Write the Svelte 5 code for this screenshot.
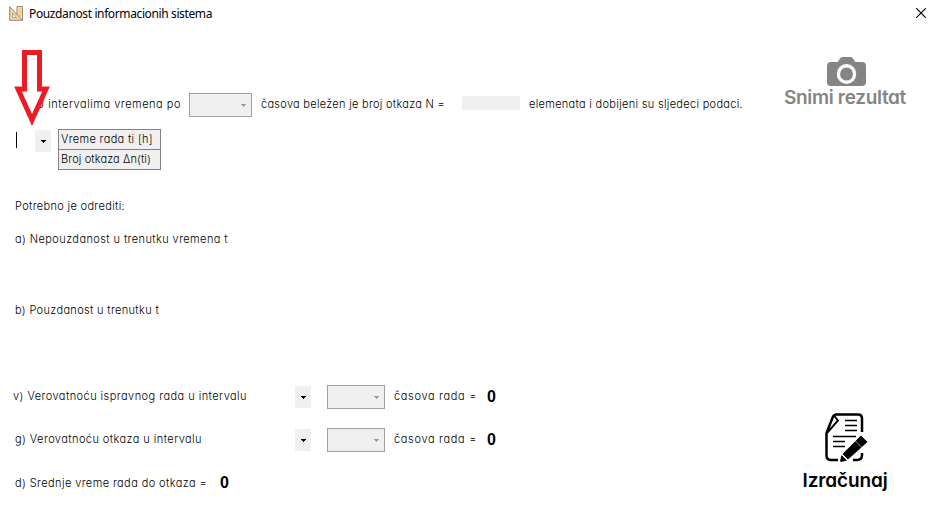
<script>
  // Tracks a label so that its text spans the given width in pixels.
  function span(node, width) {
    const n = [...node.textContent].length;
    const natural = node.getBoundingClientRect().width;
    node.style.letterSpacing = `${(width - natural) / n}px`;
  }

  const intervals = [
    { label: 'v) Verovatnoću ispravnog rada u intervalu', width: 234, indent: 13 },
    { label: 'g) Verovatnoću otkaza u intervalu', width: 187, indent: 15 }
  ];
</script>

{#snippet caret()}
  <svg class="caret" width="5" height="3" viewBox="0 0 5 3" shape-rendering="crispEdges"><path d="M0 0h5v1H4v1H3v1H2V2H1V1H0z" fill="currentColor" /></svg>
{/snippet}

<div class="window">
  <header>
    <svg width="14" height="15" viewBox="0 0 14 15">
      <path d="M8 .5h5.500v13H8z" fill="#ffe1a8" stroke="#958771" />
      <path d="M10 3h2M10 5h2M10 7h2M10 9h2" stroke="#c49a62" stroke-width=".6" />
      <path d="M.7.7v13.600h12.800z" fill="#f8d59b" stroke="#8f877b" />
      <path d="M3.500 7v4.500h4z" fill="#fff" stroke="#9c907d" stroke-width=".8" />
    </svg>
    <h1><span use:span={183}>Pouzdanost informacionih sistema</span></h1>
    <svg class="close" width="10" height="10" viewBox="0 0 10 10"><path d="M.2.2l9.600 9.600M9.800.2L.2 9.800" stroke="#000" stroke-width="1.150" /></svg>
  </header>

  <div class="body">
    <main>
      <div class="row first">
        <span class="t" use:span={145}>U intervalima vremena po</span>
        <div class="combo wide">{@render caret()}</div>
        <span class="t hours" use:span={184}>časova beležen je broj otkaza N =</span>
        <div class="total"></div>
        <span class="t" use:span={214}>elemenata i dobijeni su sljedeci podaci.</span>
      </div>

      <div class="entry">
        <i class="cursor"></i>
        <button class="drop" aria-label="Izaberi">{@render caret()}</button>
        <div class="table">
          <div><span class="t" use:span={92}>Vreme rada ti [h]</span></div>
          <div><span class="t" use:span={90}>Broj otkaza Δn(ti)</span></div>
        </div>
      </div>

      <p class="needed"><span class="t" use:span={110}>Potrebno je odrediti:</span></p>
      <p class="qa"><span class="t" use:span={213}>a) Nepouzdanost u trenutku vremena t</span></p>
      <p class="qb"><span class="t" use:span={144}>b) Pouzdanost u trenutku t</span></p>

      {#each intervals as row}
        <div class="row interval">
          <div class="name" style:padding-left="{row.indent}px"><span class="t" use:span={row.width}>{row.label}</span></div>
          <button class="drop" aria-label="Izaberi">{@render caret()}</button>
          <div class="combo">{@render caret()}</div>
          <span class="t rada" use:span={83}>časova rada =</span>
          <b>0</b>
        </div>
      {/each}

      <div class="row last"><span class="t" use:span={192}>d) Srednje vreme rada do otkaza =</span><b>0</b></div>
    </main>

    <aside>
      <div class="action save">
        <svg width="39" height="30" viewBox="0 0 40 30" preserveAspectRatio="none">
          <path fill-rule="evenodd" fill="#858585" d="M4 5h7l2-3q1-2 3-2h8q2 0 3 2l2 3h7q4 0 4 4v16q0 4-4 4H4q-4 0-4-4V9q0-4 4-4zM20 7a10 10 0 1 0 0 20 10 10 0 0 0 0-20z" />
          <circle cx="20" cy="17" r="6.600" fill="#858585" />
        </svg>
        <strong><span use:span={122}>Snimi rezultat</span></strong>
      </div>
      <div class="action calc">
        <svg width="44" height="50" viewBox="0 0 44 50">
          <path d="M10 1.500h23q4 0 4 4V19M37 40v2q0 5-5 5h-4M13 47H6q-4.500 0-4.500-4.500V20L8 3.500q1-2 3-2" fill="none" stroke="#000" stroke-width="2.500" />
          <path d="M8.500 2l4.500 5.500L2 20" fill="none" stroke="#000" stroke-width="1.900" />
          <path d="M20 7.500h12M20 12.500h12M20 17.500h12M8 23.500h23M8 28.500h12M8 33.500h12" fill="none" stroke="#000" stroke-width="1.600" />
          <path d="M36 22.500l6.500 6.500-19.500 17.500-5.500-5.500zM16.500 42l5.500 5.500-6 1.500-1-1z" />
          <path d="M30.500 28l6.500 6.500M17 41.300l6 6" stroke="#fff" stroke-width=".6" />
        </svg>
        <strong><span use:span={85}>Izračunaj</span></strong>
      </div>
    </aside>
  </div>

  <svg class="arrow" width="38" height="80" viewBox="0 0 38 80">
    <path d="M10.500 4.500h15V41h6.500L18 72 4 41h6.500z" fill="#fff" stroke="#ed1c24" stroke-width="5" />
  </svg>
</div>

<style>
  :global(body) { background: #fff; }
  .window {
    position: relative; width: 936px; height: 519px; overflow: hidden; background: #fff; color: #000;
    font: 300 11px/14px "Century Gothic", Inter, sans-serif; font-feature-settings: "cv11" 1;
  }
  svg { display: block; flex: none; }
  header { display: flex; height: 28px; box-sizing: border-box; padding: 6px 10px 0 9px; }
  h1 { margin: 0 0 0 6px; font: 12px/16px "Segoe UI", "Noto Sans", sans-serif; flex: 1; }
  .close { margin-top: 2px; }
  .body { display: flex; }
  main { width: 770px; }
  .t, h1 span, strong span { display: inline-block; white-space: pre; }
  .t { flex: none; }
  .row { display: flex; align-items: center; }
  .first { height: 24px; margin-top: 65px; padding-left: 36px; }
  .first .t { padding-bottom: 2px; }
  .combo {
    display: flex; align-items: center; justify-content: flex-end; box-sizing: border-box; flex: none;
    width: 58px; height: 24px; padding-right: 5px; background: #f0f0f0; border: 1px solid #a0a0a0; color: #a0a0a0;
  }
  .combo.wide { width: 63px; margin-left: 8px; }
  .hours { margin-left: 9px; }
  .total { width: 58px; height: 14px; margin: 0 9px 4px 17px; background: #f0f0f0; }
  .entry { display: flex; height: 42px; margin-top: 12px; padding-left: 16px; }
  .cursor { width: 1px; height: 16px; margin-top: 3px; background: #000; }
  .drop {
    display: flex; align-items: center; justify-content: center; flex: none;
    width: 16px; height: 22px; padding: 0; border: 0; background: #f0f0f0; color: #000;
  }
  .entry .drop { margin: 1px 7px 0 18px; }
  .table { box-sizing: border-box; width: 103px; height: 41px; border: 1px solid #828282; background: #f0f0f0; }
  .table div { height: 19px; padding: 2px 0 0 2px; box-sizing: border-box; }
  .table div + div { border-top: 1px solid #828282; height: 20px; }
  p { margin: 0; padding-left: 15px; height: 14px; }
  .needed { margin-top: 28px; }
  .qa { margin-top: 19px; }
  .qb { margin: 57px 0 68px; }
  .interval { height: 24px; margin-bottom: 19px; }
  .name { box-sizing: border-box; width: 295px; height: 16px; }
  .interval .combo { margin-left: 16px; }
  .rada { margin-left: 9px; padding-bottom: 2px; }
  b { margin-left: 10px; font: bold 16px/20px "Liberation Sans", sans-serif; }
  .last { padding: 2px 0 0 15px; }
  .last b { margin-left: 13px; }
  aside { width: 166px; }
  .action { display: flex; flex-direction: column; align-items: center; }
  .action svg { margin-left: 3px; }
  .save { color: #858585; padding: 29px 16px 0 0; }
  .calc { color: #000; padding: 304px 16px 0 0; }
  .calc svg { margin: 0 0 7px 4px; }
  strong { font-size: 19px; line-height: 22px; font-weight: 600; }
  .arrow { position: absolute; left: 14px; top: 48px; }
</style>
